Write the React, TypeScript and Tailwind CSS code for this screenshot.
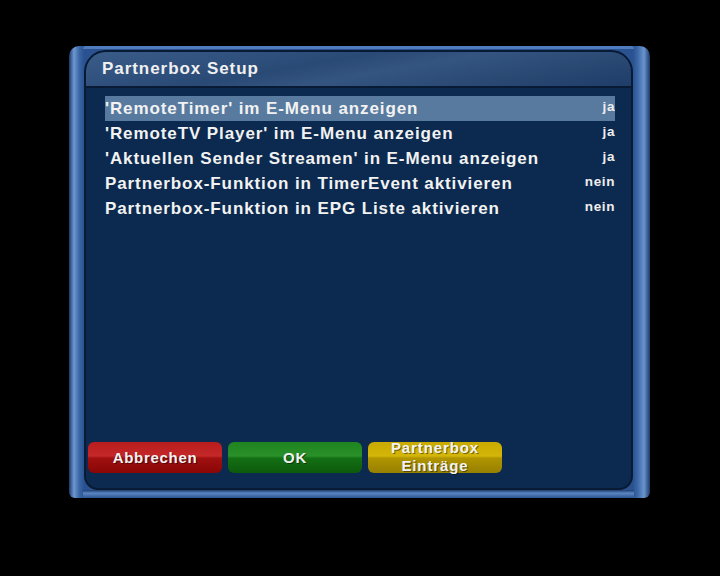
import React from "react";

const rows: { label: string; value: string }[] = [
  { label: "'RemoteTimer' im E-Menu anzeigen", value: "ja" },
  { label: "'RemoteTV Player' im E-Menu anzeigen", value: "ja" },
  { label: "'Aktuellen Sender Streamen' in E-Menu anzeigen", value: "ja" },
  { label: "Partnerbox-Funktion in TimerEvent aktivieren", value: "nein" },
  { label: "Partnerbox-Funktion in EPG Liste aktivieren", value: "nein" },
];

const font = { fontFamily: '"Liberation Sans", Arial, sans-serif' };

function ColorButton({ tone, children }: { tone: "red" | "green" | "yellow"; children: React.ReactNode }) {
  const bg =
    tone === "red"
      ? "bg-[linear-gradient(180deg,#b81c1c_0%,#c42828_45%,#a01010_52%,#8a0606_100%)]"
      : tone === "green"
      ? "bg-[linear-gradient(180deg,#1f8420_0%,#2a9028_45%,#147014_52%,#0c5a0c_100%)]"
      : "bg-[linear-gradient(180deg,#c8aa00_0%,#d4b60a_45%,#b09400_52%,#968000_100%)]";
  return (
    <div
      className={`w-[134px] h-[31px] rounded-[6px] ${bg} flex items-center justify-center text-center text-[15px] leading-[15px] font-bold text-[#f2f2f2] tracking-[0.7px] [text-shadow:1px_1px_0_rgba(0,0,0,0.45)]`}
    >
      {children}
    </div>
  );
}

export default function App() {
  return (
    <div className="w-[720px] h-[576px] bg-black overflow-hidden pt-[46px] pl-[69px]" style={font}>
      {/* outer blue frame */}
      <div className="w-[581px] h-[452px] rounded-t-[10px] rounded-b-[6px] bg-[linear-gradient(90deg,#1c3a6a_0px,#6f98d2_5px,#3c68a6_10px,#2a5290_15px,#2a5290_calc(100%-17px),#3e6aa8_calc(100%-12px),#6a94ce_calc(100%-6px),#1c3a6a_100%)] pt-[4px] pl-[15px] pr-[17px] pb-[8px] relative">
        <div className="absolute left-[14px] right-[16px] top-0 h-[3px] bg-[#4f7cbc] rounded-t-[8px]" />
        <div className="absolute left-[14px] right-[16px] bottom-0 h-[8px] bg-[linear-gradient(180deg,#1e3c6c_0%,#5a86c4_40%,#2c5490_100%)]" />
        {/* inner panel */}
        <div className="relative h-full flex flex-col rounded-t-[22px] rounded-bl-[14px] rounded-br-[14px] border-2 border-[#081a34] bg-[#0c2a4f] overflow-hidden">
          {/* title */}
          <div className="h-[36px] shrink-0 flex items-center pl-[16px] border-b-2 border-[#081a34] bg-[linear-gradient(170deg,#3a5c88_0%,#2a4a76_40%,#34557f_55%,#1e3d68_100%)]">
            <span className="text-[17px] font-bold text-[#f0f0f0] tracking-[0.95px]">Partnerbox Setup</span>
          </div>
          {/* list */}
          <div className="pt-[8px] pl-[19px] pr-[16px] flex flex-col">
            {rows.map((r, i) => (
              <div
                key={r.label}
                className={`h-[25px] flex items-center justify-between ${i === 0 ? "bg-[#587a9f]" : ""}`}
              >
                <span className="text-[17px] font-bold text-[#f2f2f2] tracking-[0.9px]">{r.label}</span>
                <span className="text-[13.5px] font-bold text-[#eeeeee] tracking-[0.6px] -mt-[3px]">{r.value}</span>
              </div>
            ))}
          </div>
          <div className="flex-1" />
          {/* buttons */}
          <div className="flex gap-[6px] pl-[2px] pb-[15px]">
            <ColorButton tone="red">Abbrechen</ColorButton>
            <ColorButton tone="green">OK</ColorButton>
            <ColorButton tone="yellow">
              <span className="text-[15px] leading-[18px] tracking-[0.9px] -mt-[2px]">
                Partnerbox
                <br />
                Einträge
              </span>
            </ColorButton>
          </div>
        </div>
      </div>
    </div>
  );
}
